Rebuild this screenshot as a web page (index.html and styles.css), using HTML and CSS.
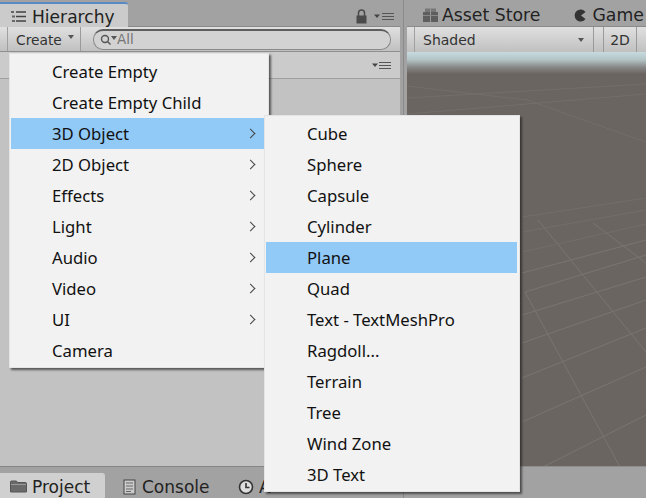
FILE: index.html
```html
<!DOCTYPE html>
<html lang="en">
<head>
<meta charset="utf-8">
<title>Unity editor create menu</title>
<link rel="stylesheet" href="styles.css">
</head>
<body>
<div class="editor">
  <section class="left-pane">
    <div class="tabbar">
      <div class="tab active-tab">
        <svg class="ic" width="16" height="12" viewBox="0 0 16 12"><path d="M0 0h3v2H0zM1 4.500h3v2H1zM1 9h3v2H1z" fill="#666"/><path d="M5 1h10M5 5.500h10M5 10h10" stroke="#444" stroke-width="1.500"/></svg>
        <span>Hierarchy</span>
      </div>
      <div class="tab-tools">
        <svg width="11" height="15" viewBox="0 0 11 15"><path d="M2.500 7V4a3 3 0 0 1 6 0V7" fill="none" stroke="#4a4a4a" stroke-width="1.500"/><rect x="0.500" y="6.500" width="10" height="8" fill="#4a4a4a"/></svg>
        <svg width="21" height="9" viewBox="0 0 21 9"><path d="M0 2.500h6L3 6z" fill="#444"/><path d="M8 1.500h12M8 4.500h12M8 7.500h12" stroke="#555"/></svg>
      </div>
    </div>
    <div class="toolbar">
      <div class="tool-cap"></div>
      <div class="create-btn"><span>Create</span><i class="caret"></i></div>
      <div class="search">
        <svg width="18" height="13" viewBox="0 0 18 13"><circle cx="6" cy="6" r="3.500" fill="none" stroke="#555" stroke-width="1.400"/><path d="M8.500 8.500l3 3" stroke="#555" stroke-width="1.400"/><path d="M12 3h6l-3 4z" fill="#555"/></svg>
        <span>All</span>
      </div>
    </div>
    <div class="subbar">
      <svg width="20" height="9" viewBox="0 0 20 9"><path d="M0 2.500h6L3 6z" fill="#444"/><path d="M7 1.500h12M7 4.500h12M7 7.500h12" stroke="#555"/></svg>
    </div>
    <div class="hier-body"></div>
    <div class="bottom-tabs">
      <div class="btab btab-active">
        <svg width="17" height="13" viewBox="0 0 17 13"><path d="M.5 2a1 1 0 0 1 1-1h5l1 1.500h8a1 1 0 0 1 1 1V12H.5z" fill="#6a6a6a" stroke="#555"/><path d="M1 4.500h15" stroke="#999"/></svg>
        <span>Project</span>
      </div>
      <div class="btab console-tab">
        <svg width="13" height="16" viewBox="0 0 13 16"><rect x="1" y="1" width="11" height="14" fill="#ccc" stroke="#444"/><path d="M3 4h7M3 7h7M3 10h7M3 12.500h5" stroke="#666"/></svg>
        <span>Console</span>
      </div>
      <div class="btab anim-tab">
        <svg width="16" height="16" viewBox="0 0 16 16"><circle cx="8" cy="8" r="6.500" fill="#ddd" stroke="#333" stroke-width="1.600"/><path d="M8 4v4.500h3.500" fill="none" stroke="#333" stroke-width="1.600"/></svg>
        <span>A</span>
      </div>
    </div>
  </section>

  <div class="divider"></div>

  <section class="right-pane">
    <div class="tabbar right-tabs">
      <div class="rtab">
        <svg width="17" height="16" viewBox="0 0 17 16"><rect x="1" y="5" width="15" height="10" fill="#5e5e5e"/><rect x="3" y="1.500" width="11" height="3.500" fill="#777"/><path d="M8.500 1.500V15" stroke="#999"/><path d="M1 8.500h15" stroke="#888"/></svg>
        <span>Asset Store</span>
      </div>
      <div class="rtab game-tab">
        <svg width="13" height="13" viewBox="0 0 13 13"><path d="M12.500 3A6 6 0 1 0 12.500 10L8 6.500z" fill="#333"/></svg>
        <span>Game</span>
      </div>
    </div>
    <div class="toolbar right-toolbar">
      <div class="tool-cap"></div>
      <div class="shaded"><span>Shaded</span><i class="caret small-caret"></i></div>
      <div class="gap-btn"></div>
      <div class="two-d">2D</div>
    </div>
    <div class="scene">
      <svg class="grid" width="239" height="414" viewBox="0 0 239 414">
        <defs>
          <linearGradient id="sky" x1="0" y1="0" x2="0" y2="1"><stop offset="0" stop-color="#c6dbdf"/><stop offset=".35" stop-color="#b4c4c6"/><stop offset=".7" stop-color="#868686"/><stop offset="1" stop-color="#6b6561"/></linearGradient>
        </defs>
        <rect width="239" height="414" fill="#6b6561"/>
        <rect width="239" height="22" fill="url(#sky)"/>
        <g stroke="#79756f" stroke-width="1" fill="none">
          <path d="M115 370L239 315"/>
          <path d="M115 326L239 276"/>
          <path d="M115 291L239 248"/>
          <path d="M115 263L239 225"/>
          <path d="M118 240L239 203"/>
          <path d="M115 221L239 188"/>
          <path d="M136 415L239 363"/>
          <path d="M118 240L213 415"/>
          <path d="M131 168L239 300"/>
          <path d="M186 171L239 211"/>
        </g>
        <g stroke="#726e6a" stroke-width="1" fill="none">
          <path d="M115 200L239 172"/>
          <path d="M115 180L239 158"/>
          <path d="M115 165L239 146"/>
          <path d="M0 62L239 42"/>
          <path d="M0 46L239 32"/>
          <path d="M0 34L120 48L239 90"/>
        </g>
      </svg>
    </div>
    <div class="right-foot"></div>
  </section>
</div>

<ul class="menu main-menu">
  <li>Create Empty</li>
  <li>Create Empty Child</li>
  <li class="hl sub">3D Object</li>
  <li class="sub">2D Object</li>
  <li class="sub">Effects</li>
  <li class="sub">Light</li>
  <li class="sub">Audio</li>
  <li class="sub">Video</li>
  <li class="sub">UI</li>
  <li>Camera</li>
</ul>

<ul class="menu sub-menu">
  <li>Cube</li>
  <li>Sphere</li>
  <li>Capsule</li>
  <li>Cylinder</li>
  <li class="hl">Plane</li>
  <li>Quad</li>
  <li>Text - TextMeshPro</li>
  <li>Ragdoll...</li>
  <li>Terrain</li>
  <li>Tree</li>
  <li>Wind Zone</li>
  <li>3D Text</li>
</ul>
</body>
</html>
```
FILE: styles.css
```css
* { box-sizing: border-box; }
html, body { margin: 0; padding: 0; }
body {
  width: 646px;
  height: 498px;
  overflow: hidden;
  position: relative;
  font-family: "DejaVu Sans", "Noto Sans", sans-serif;
  color: #222;
  background: #a2a2a2;
}
.editor { display: flex; width: 646px; height: 498px; }
.left-pane { width: 400px; display: flex; flex-direction: column; flex: none; }
.divider { width: 7px; flex: none; position: relative; background: linear-gradient(90deg, #a2a2a2 0 3px, #8a8a8a 3px 4px, #a2a2a2 4px); }
.right-pane { flex: 1; display: flex; flex-direction: column; min-width: 0; }
.tabbar { height: 27px; flex: none; display: flex; align-items: flex-end; background: #a2a2a2; border-bottom: 1px solid #8a8a8a; }
.tab { height: 25px; width: 128px; display: flex; align-items: center; gap: 5px; padding: 2px 0 0 11px; margin-bottom: -1px; background: #cbcbcb; border-top: 2px solid #5a8ac6; border-radius: 0 3px 0 0; font-size: 17.100px; }
.tab-tools { margin-left: auto; height: 26px; display: flex; align-items: center; gap: 7px; padding: 6px 5px 0 0; }
.toolbar { height: 25px; flex: none; display: flex; align-items: center; background: linear-gradient(#e0e0e0, #c0c0c0); border-bottom: 1px solid #8f8f8f; }
.tool-cap { width: 8px; height: 100%; border-right: 1px solid #a0a0a0; }
.create-btn { width: 73px; height: 100%; display: flex; align-items: center; gap: 6px; padding: 1px 0 0 8px; border-right: 1px solid #9a9a9a; font-size: 13.800px; color: #333; }
.caret { width: 0; height: 0; border-left: 3.500px solid transparent; border-right: 3.500px solid transparent; border-top: 4px solid #555; margin-top: -5px; }
.search { flex: none; width: 298px; height: 21px; margin-left: 12px; display: flex; align-items: center; gap: 0; padding: 0 0 1px 5px; border: 1px solid #8a8a8a; border-top: 2px solid #5e5e5e; border-radius: 10px; background: #d2d2d2; font-size: 13.500px; color: #777; }
.subbar { height: 27px; flex: none; display: flex; align-items: center; justify-content: flex-end; padding-right: 8px; background: #cbcbcb; border-bottom: 1px solid #a0a0a0; }
.hier-body { flex: 1; background: #c2c2c2; }
.bottom-tabs { height: 32px; flex: none; display: flex; align-items: flex-end; background: #a2a2a2; border-top: 1px solid #858585; }
.btab { height: 25px; flex: none; display: flex; align-items: center; gap: 5px; padding-top: 2px; font-size: 17px; }
.btab-active { width: 105px; padding-left: 10px; background: #d0d0d0; border-radius: 0 3px 0 0; margin-right: 18px; }
.console-tab { width: 115px; gap: 6px; }
.anim-tab { width: 40px; }
.rtab { display: flex; align-items: center; gap: 3px; height: 26px; padding: 4px 0 0 15px; font-size: 17.300px; flex: none; }
.game-tab { padding-left: 33px; gap: 6px; white-space: nowrap; }
.right-tabs { overflow: hidden; }
.right-toolbar { border-bottom: none; }
.shaded { width: 179px; height: 100%; display: flex; align-items: center; justify-content: space-between; padding: 0 9px 0 8px; border-right: 1px solid #9a9a9a; font-size: 14px; color: #333; }
.small-caret { border-left-width: 3px; border-right-width: 3px; margin-top: 0; }
.gap-btn { width: 10px; height: 100%; border-right: 1px solid #9a9a9a; }
.two-d { width: 33px; height: 100%; display: flex; align-items: center; justify-content: center; border-right: 1px solid #9a9a9a; font-size: 14px; color: #333; }
.scene { height: 414px; flex: none; overflow: hidden; }
.grid { display: block; }
.right-foot { flex: 1; background: #a2a2a2; border-top: 1px solid #8e8e8e; }
.menu { position: absolute; margin: 0; padding: 2px 2px 0 1px; list-style: none; background: #f2f2f2; border: 1px solid #e4e4e4; box-shadow: 2px 2px 2px rgba(30,30,30,.65); font-family: "Noto Sans", "Open Sans", sans-serif; font-size: 16.700px; color: #111; }
.menu li { height: 31px; line-height: 32px; padding-left: 41px; position: relative; white-space: nowrap; }
.main-menu { left: 9px; top: 53px; width: 260px; height: 315px; }
.sub-menu { left: 264px; top: 115px; width: 256px; height: 377px; }
.hl { background: #91c9f7; }
.sub::after { content: ""; position: absolute; right: 12px; top: 12px; width: 6px; height: 6px; border-top: 1px solid #444; border-right: 1px solid #444; transform: rotate(45deg); }
```
